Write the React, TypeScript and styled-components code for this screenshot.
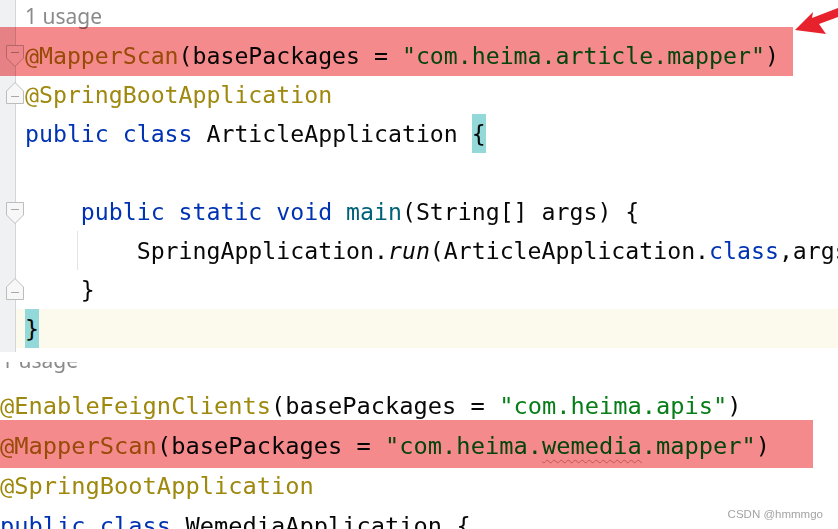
import { createGlobalStyle, styled } from 'styled-components';

type Kind = 'ann' | 'kw' | 'str' | 'fn' | 'txt' | 'call';

const colors: Record<Kind, string> = {
  ann: '#9e880d',
  kw: '#0033b3',
  str: '#067d17',
  fn: '#00627a',
  txt: '#080808',
  call: '#080808',
};

const GlobalStyle = createGlobalStyle`
  html, body { margin: 0; padding: 0; background: #fff; }
  #root { width: 838px; height: 529px; }
`;

const Screen = styled.div`
  position: relative;
  width: 838px;
  height: 529px;
  overflow: hidden;
  background: #fff;
  font-family: 'DejaVu Sans Mono', 'Liberation Mono', monospace;
`;

const TopPane = styled.section`
  height: 352px;
  display: flex;
  flex-direction: column;
  background: linear-gradient(to right, #f0f1f3 15px, #d3d5d8 15px 16px, #fff 16px);
`;

const BottomPane = styled.section`
  display: flex;
  flex-direction: column;
`;

const Hint = styled.div`
  height: 36px;
  line-height: 33px;
  padding-left: 25px;
  font-family: 'Noto Sans', sans-serif;
  font-size: 21px;
  color: #8a8a8a;
`;

const CutHint = styled.div`
  height: 34px;
  padding-top: 10px;
  box-sizing: border-box;
`;

const CutHintClip = styled.div`
  height: 24px;
  overflow: hidden;
  padding-left: 1px;
  font-family: 'Noto Sans', sans-serif;
  font-size: 21px;
  line-height: 20px;
  color: #8a8a8a;
  & > span {
    display: block;
    margin-top: -12px;
  }
`;

const Line = styled.div<{ $size: number; $height: number; $pad: number; $current?: boolean }>`
  position: relative;
  height: ${(p) => p.$height}px;
  line-height: ${(p) => p.$height}px;
  padding-left: ${(p) => p.$pad}px;
  font-size: ${(p) => p.$size}px;
  white-space: pre;
  color: #080808;
  background: ${(p) =>
    p.$current ? 'linear-gradient(to right, transparent 16px, #fcfaed 16px)' : 'transparent'};
`;

const Tok = styled.span<{ $k: Kind }>`
  color: ${(p) => colors[p.$k]};
  font-style: ${(p) => (p.$k === 'call' ? 'italic' : 'normal')};
`;

const Squiggle = styled.span`
  text-decoration: underline wavy #caa28c;
  text-decoration-thickness: 1px;
  text-underline-offset: 5px;
`;

const BraceMatch = styled.span`
  display: inline-block;
  line-height: inherit;
  background: #93d9d9;
`;

const Mark = styled.div<{ $top: number; $width: number; $height: number }>`
  position: absolute;
  left: 0;
  top: ${(p) => p.$top}px;
  width: ${(p) => p.$width}px;
  height: ${(p) => p.$height}px;
  background: #f58a8c;
  mix-blend-mode: multiply;
  pointer-events: none;
`;

const Guide = styled.div`
  position: absolute;
  left: 77px;
  top: 0;
  bottom: 0;
  width: 1px;
  background: #e3e3e3;
`;

const FoldBox = styled.svg<{ $top: number }>`
  position: absolute;
  left: 6px;
  top: ${(p) => p.$top}px;
`;

const Watermark = styled.div`
  position: absolute;
  right: 15px;
  bottom: 9px;
  font-family: 'Liberation Sans', Arial, sans-serif;
  font-size: 11.5px;
  color: #a3a3a3;
`;

const Arrow = styled.svg`
  position: absolute;
  top: 0;
  right: 0;
`;

function Fold({ dir, top }: { dir: 'down' | 'up'; top: number }) {
  const d = dir === 'down' ? 'M0.5 0.5H17.5V13L9 21.5L0.5 13Z' : 'M0.5 21.5H17.5V9L9 0.5L0.5 9Z';
  const y = dir === 'down' ? 7.5 : 14.5;
  return (
    <FoldBox $top={top} width="18" height="22" viewBox="0 0 18 22">
      <path d={d} fill="#f7f7f7" stroke="#bdbdbd" />
      <path d={`M5 ${y}H13`} stroke="#a8a8a8" />
    </FoldBox>
  );
}

const top = { $size: 23.2, $height: 39, $pad: 25 };
const bottom = { $size: 23.7, $height: 40, $pad: 0 };

export default function App() {
  return (
    <Screen>
      <GlobalStyle />
      <TopPane>
        <Hint>1 usage</Hint>
        <Line {...top}>
          <Fold dir="down" top={9} />
          <Tok $k="ann">@MapperScan</Tok>(basePackages = <Tok $k="str">"com.heima.article.mapper"</Tok>)
          <Mark $top={-9} $width={793} $height={49} />
        </Line>
        <Line {...top}>
          <Fold dir="up" top={7} />
          <Tok $k="ann">@SpringBootApplication</Tok>
        </Line>
        <Line {...top}>
          <Tok $k="kw">public class</Tok> ArticleApplication <BraceMatch>{'{'}</BraceMatch>
        </Line>
        <Line {...top} />
        <Line {...top}>
          <Fold dir="down" top={10} />
          {'    '}
          <Tok $k="kw">public static void</Tok> <Tok $k="fn">main</Tok>(String[] args) {'{'}
        </Line>
        <Line {...top}>
          <Guide />
          {'        '}SpringApplication.<Tok $k="call">run</Tok>(ArticleApplication.<Tok $k="kw">class</Tok>,args);
        </Line>
        <Line {...top}>
          <Fold dir="up" top={8} />
          {'    }'}
        </Line>
        <Line {...top} $current>
          <BraceMatch>{'}'}</BraceMatch>
        </Line>
      </TopPane>
      <BottomPane>
        <CutHint>
          <CutHintClip>
            <span>1 usage</span>
          </CutHintClip>
        </CutHint>
        <Line {...bottom}>
          <Tok $k="ann">@EnableFeignClients</Tok>(basePackages = <Tok $k="str">"com.heima.apis"</Tok>)
        </Line>
        <Line {...bottom}>
          <Tok $k="ann">@MapperScan</Tok>(basePackages = <Tok $k="str">"com.heima.<Squiggle>wemedia</Squiggle>.mapper"</Tok>)
          <Mark $top={-6} $width={813} $height={48} />
        </Line>
        <Line {...bottom}>
          <Tok $k="ann">@SpringBootApplication</Tok>
        </Line>
        <Line {...bottom}>
          <Tok $k="kw">public class</Tok> WemediaApplication {'{'}
        </Line>
      </BottomPane>
      <Arrow width="50" height="40" viewBox="0 0 50 40">
        <polygon points="7,30 25,12 24,18 50,8 50,17 31,24 38,34" fill="#e8222c" />
      </Arrow>
      <Watermark>CSDN @hmmmgo</Watermark>
    </Screen>
  );
}
